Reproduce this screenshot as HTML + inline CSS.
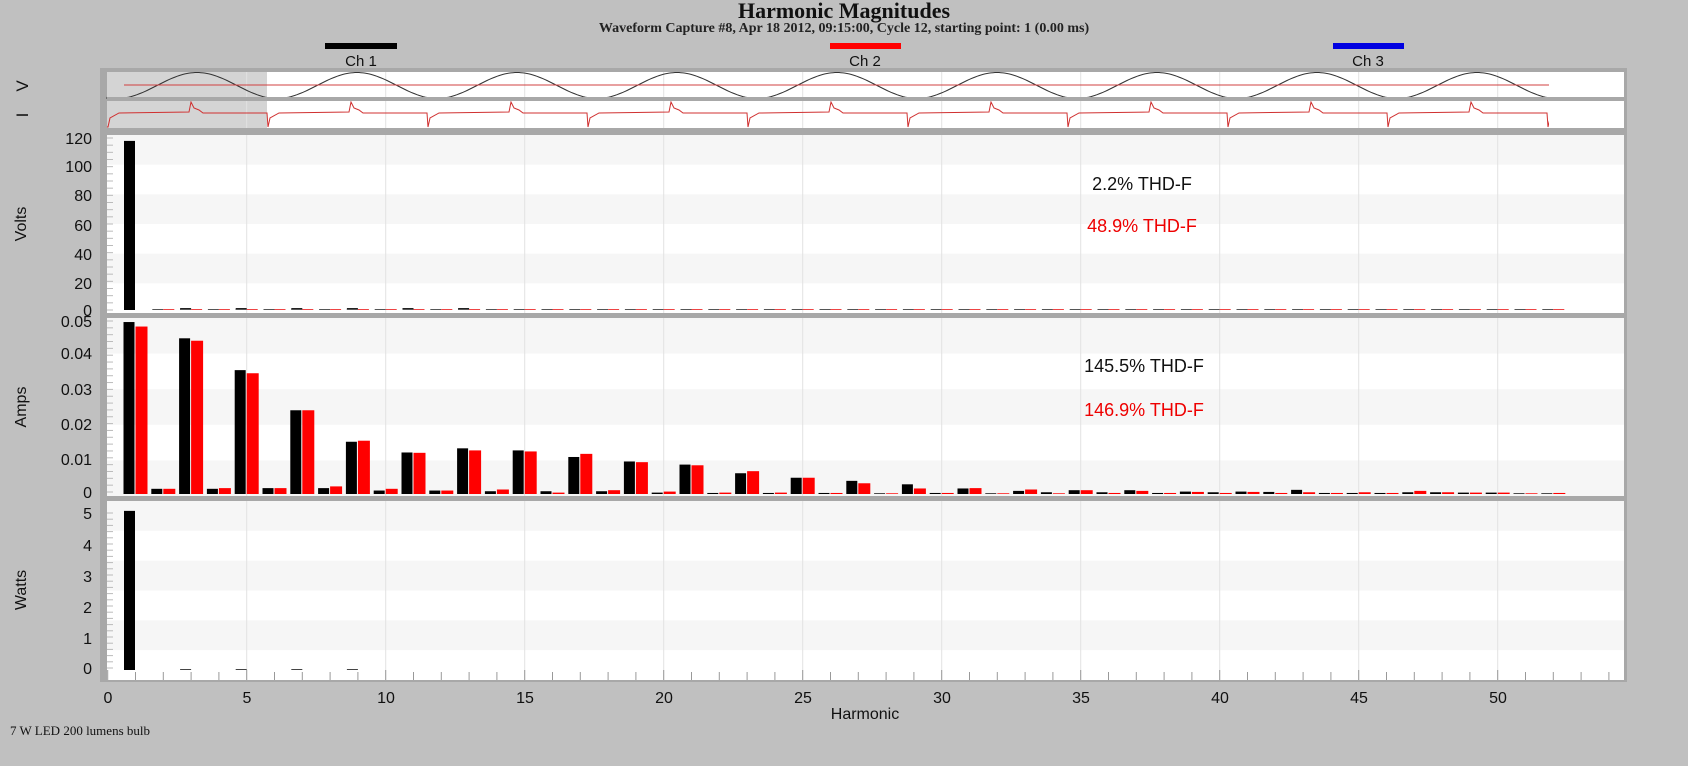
<!DOCTYPE html>
<html><head><meta charset="utf-8"><style>
html,body{margin:0;padding:0;background:#c0c0c0;width:1688px;height:766px;overflow:hidden}
svg{display:block}
text{font-family:"Liberation Sans",sans-serif}
.s{font-family:"Liberation Serif",serif}
</style></head><body>
<svg id="s" width="1688" height="766" viewBox="0 0 1688 766" xmlns="http://www.w3.org/2000/svg">
<defs><clipPath id="cw"><rect x="107" y="68" width="1442" height="62"/></clipPath></defs>
<rect width="1688" height="766" fill="#c0c0c0"/>
<text class="s" x="844" y="18" text-anchor="middle" font-size="22" font-weight="bold" fill="#111">Harmonic Magnitudes</text>
<text class="s" x="844" y="32" text-anchor="middle" font-size="14" font-weight="bold" fill="#222">Waveform Capture #8, Apr 18 2012, 09:15:00, Cycle 12,  starting point: 1  (0.00 ms)</text>
<rect x="325" y="43" width="72" height="6" fill="#000"/>
<rect x="830" y="43" width="71" height="6" fill="#f00"/>
<rect x="1333" y="43" width="71" height="6" fill="#0000e0"/>
<text x="361" y="66" text-anchor="middle" font-size="15" fill="#111">Ch 1</text>
<text x="865" y="66" text-anchor="middle" font-size="15" fill="#111">Ch 2</text>
<text x="1368" y="66" text-anchor="middle" font-size="15" fill="#111">Ch 3</text>
<text transform="translate(28,86) rotate(-90)" text-anchor="middle" font-size="17" fill="#111">V</text>
<text transform="translate(28,115) rotate(-90)" text-anchor="middle" font-size="17" fill="#111">I</text>
<g id="plot"></g>
<text x="26" y="224" transform="rotate(-90 26 224)" text-anchor="middle" font-size="16" fill="#111">Volts</text>
<text x="26" y="407" transform="rotate(-90 26 407)" text-anchor="middle" font-size="16" fill="#111">Amps</text>
<text x="26" y="590" transform="rotate(-90 26 590)" text-anchor="middle" font-size="16" fill="#111">Watts</text>
<g font-size="16" fill="#111" text-anchor="end">
<text x="92" y="144">120</text><text x="92" y="172">100</text><text x="92" y="201">80</text><text x="92" y="231">60</text><text x="92" y="260">40</text><text x="92" y="289">20</text><text x="92" y="316">0</text>
<text x="92" y="327">0.05</text><text x="92" y="359">0.04</text><text x="92" y="395">0.03</text><text x="92" y="430">0.02</text><text x="92" y="465">0.01</text><text x="92" y="498">0</text>
<text x="92" y="519">5</text><text x="92" y="551">4</text><text x="92" y="582">3</text><text x="92" y="613">2</text><text x="92" y="644">1</text><text x="92" y="674">0</text>
</g>
<g font-size="16" fill="#111" text-anchor="middle">
<text x="108" y="703">0</text><text x="247" y="703">5</text><text x="386" y="703">10</text><text x="525" y="703">15</text><text x="664" y="703">20</text><text x="803" y="703">25</text><text x="942" y="703">30</text><text x="1081" y="703">35</text><text x="1220" y="703">40</text><text x="1359" y="703">45</text><text x="1498" y="703">50</text>
<text x="865" y="719">Harmonic</text>
</g>
<text class="s" x="10" y="735" font-size="13" fill="#111">7 W LED 200 lumens bulb</text>
<g font-size="18" text-anchor="middle">
<text x="1142" y="190" fill="#111">2.2% THD-F</text>
<text x="1142" y="232" fill="#e00">48.9% THD-F</text>
<text x="1144" y="372" fill="#111">145.5% THD-F</text>
<text x="1144" y="416" fill="#e00">146.9% THD-F</text>
</g>
</svg>
<script>
var g=document.getElementById("plot"),h="";
var L=107,R=1624;function X(k){return 107.7+27.8*k;}
function r(x,y,w,hh,f){h+='<rect x="'+x+'" y="'+y+'" width="'+w+'" height="'+hh+'" fill="'+f+'"/>';}
r(100,68,R-100+3,614,"#a8a8a8");
r(L,72,R-L,25,"#fff");r(L,72,160,25,"#d4d4d4");
r(L,101,R-L,27,"#fff");r(L,101,160,27,"#d4d4d4");
function panel(y0,y1,n){r(L,y0,R-L,y1-y0,"#fff");var st=(y1-y0)/n;for(var i=0;i<n;i+=2)r(L,y0+i*st,R-L,st,"#f6f6f6");}
panel(135,313,6);panel(318,496,5);panel(501,680,6);
for(var k=5;k<=50;k+=5){var x=X(k);h+='<line x1="'+x+'" y1="72" x2="'+x+'" y2="680" stroke="#e2e2e2" stroke-width="1"/>';}
var p="M"+L+" 99";for(var x=L;x<=1549;x+=2){var y=85.5-13*Math.sin(2*Math.PI*(x-197)/160+Math.PI/2);p+=" L"+x+" "+y.toFixed(1);}
h+='<path d="'+p+'" fill="none" stroke="#333" stroke-width="1"/>';
h+='<line x1="124" y1="85" x2="1549" y2="85" stroke="#d04040" stroke-width="1"/>';
var q="M"+L+" 127";for(var c=0;c<10;c++){var b=107+c*160;if(b>1549)break;
q+=" L"+(b+1)+" 127 L"+(b+3)+" 118 L"+(b+12)+" 113 L"+(b+82)+" 112 L"+(b+84)+" 102 L"+(b+87)+" 108 L"+(b+92)+" 110 L"+(b+96)+" 113 L"+(b+160)+" 113";}
h+='<path d="'+q+'" fill="none" stroke="#d03030" stroke-width="1" clip-path="url(#cw)"/>';
var ya=310,s1=1.433;r(124,ya-118*s1,11,118*s1,"#000");
[3,5,7,9,11,13].forEach(function(k){r(X(k)-11,ya-2,11,2,"#222");});
for(var k=2;k<=52;k++){r(X(k)-11,ya-1,11,1,"#555");r(X(k),ya-1,11,1,"#e44");}
var A=[[.0497,.0484],[.0015,.0015],[.045,.0443],[.0015,.0017],[.0358,.0349],[.0017,.0017],[.0242,.0242],[.0017,.0022],[.0151,.0154],[.001,.0015],[.012,.0119],[.001,.001],[.0132,.0126],[.0008,.0013],[.0126,.0123],[.0008,.0004],[.0107,.0116],[.0008,.0011],[.0094,.0092],[.0004,.0007],[.0085,.0083],[.0003,.0004],[.006,.0066],[.0003,.0004],[.0047,.0047],[.0003,.0003],[.0038,.0031],[.0002,.0002],[.0028,.0016],[.0003,.0003],[.0016,.0017],[.0002,.0002],[.0009,.0013],[.0005,.0002],[.0011,.0011],[.0005,.0003],[.0011,.0009],[.0003,.0003],[.0007,.0006],[.0005,.0003],[.0007,.0006],[.0006,.0003],[.0012,.0005],[.0003,.0003],[.0003,.0005],[.0003,.0003],[.0005,.0009],[.0005,.0005],[.0004,.0004],[.0004,.0004],[.0002,.0002],[.0002,.0003]];
var yb=494,sa=3460;
A.forEach(function(v,i){var k=i+1;var a=v[0]*sa,b=v[1]*sa;r(X(k)-12,yb-a,11,a,"#000");r(X(k),yb-b,12,b,"#f00");});
var yw=670;r(124,yw-5.2*30.6,11,5.2*30.6,"#000");
[3,5,7,9].forEach(function(k){r(X(k)-11,yw-1,11,1,"#444");});
r(L,97,R-L,4,"#a8a8a8");r(L,128,R-L,7,"#a8a8a8");r(L,313,R-L,5,"#a8a8a8");r(L,496,R-L,5,"#a8a8a8");
function lt(y0,y1,n){for(var i=0;i<=n;i++){var y=y0+(y1-y0)*i/n;h+='<line x1="'+L+'" y1="'+y+'" x2="'+(L+6)+'" y2="'+y+'" stroke="#bbb"/>';}}
lt(138,310,24);lt(321,492,25);lt(513,668,25);
for(var k=0;k<=54;k++){var x=X(k),t=(k%5==0)?10:8;h+='<line x1="'+x+'" y1="'+(680-t)+'" x2="'+x+'" y2="680" stroke="#999"/>';}
g.innerHTML=h;
</script>
</body></html>
